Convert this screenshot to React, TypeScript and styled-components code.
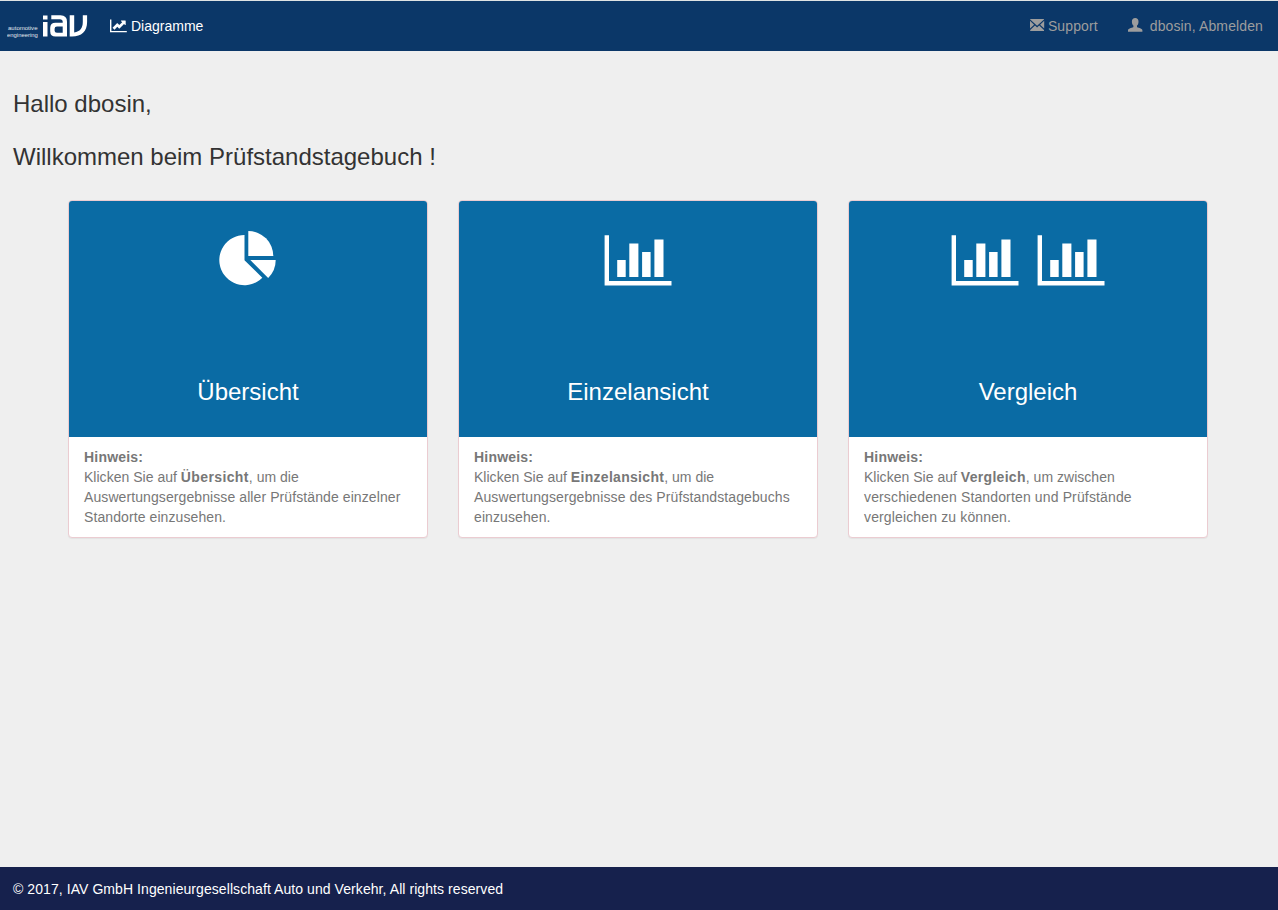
import React from "react";
import styled, { createGlobalStyle } from "styled-components";

const GlobalStyle = createGlobalStyle`
  *, *::before, *::after { box-sizing: border-box; }
  body {
    margin: 0;
    background: #efefef;
    color: #333;
    font-family: "Liberation Sans", Arial, Helvetica, sans-serif;
    font-size: 14px;
    line-height: 20px;
  }
`;

const Page = styled.div`
  display: flex;
  flex-direction: column;
  min-height: 100vh;
`;

const Navbar = styled.nav`
  display: flex;
  align-items: center;
  height: 51px;
  border-top: 1px solid #dfe3e3;
  background: #0b3768;
  padding: 0 15px 0 7px;
`;

const Brand = styled.a`
  display: block;
  width: 103px;
  height: 50px;
  svg { display: block; }
`;

const NavLink = styled.a<{ $active?: boolean; $gap: number }>`
  display: flex;
  align-items: center;
  gap: ${(p) => p.$gap}px;
  height: 50px;
  color: ${(p) => (p.$active ? "#fff" : "#9d9d9d")};
  letter-spacing: ${(p) => (p.$active ? "0" : "0.12px")};
  white-space: nowrap;
  svg { display: block; margin-bottom: ${(p) => (p.$active ? 0 : 2)}px; }
`;

const NavRight = styled.div`
  display: flex;
  gap: 30px;
  margin-left: auto;
`;

const Main = styled.main`
  flex: 1;
  padding: 40px 13px 0;
`;

const Heading = styled.h3`
  margin: 0 0 27px;
  font-size: 24px;
  font-weight: 500;
  line-height: 26px;
`;

const Cards = styled.div`
  display: grid;
  grid-template-columns: repeat(3, 360px);
  gap: 30px;
  width: 1140px;
  margin: 30px 0 0 55px;
`;

const Card = styled.section`
  border: 1px solid #ebccd1;
  border-radius: 4px;
  background: #fff;
  box-shadow: 0 1px 1px rgba(0, 0, 0, 0.05);
  overflow: hidden;
`;

const CardTop = styled.a`
  display: flex;
  flex-direction: column;
  align-items: center;
  justify-content: space-between;
  height: 236px;
  padding: 30px 0 32px;
  background: #0a6ba4;
  color: #fff;
`;

const Icons = styled.div<{ $shift?: number }>`
  display: flex;
  gap: 18.5px;
  height: 56px;
  margin-left: ${(p) => p.$shift ?? 0}px;
  svg { display: block; }
`;

const CardTitle = styled.div`
  font-size: 24px;
  line-height: 26px;
`;

const CardNote = styled.div<{ $tracking: number }>`
  padding: 10px 15px;
  color: #777;
  letter-spacing: ${(p) => p.$tracking}px;
`;

const NoteLabel = styled.strong`
  display: block;
  letter-spacing: 0.2px;
`;

const Lead = styled.span`
  letter-spacing: 0.02px;
`;

const Term = styled.strong<{ $tracking?: number }>`
  letter-spacing: ${(p) => p.$tracking ?? 0.38}px;
`;

const Footer = styled.footer`
  height: 43px;
  padding: 12px 13px;
  background: #16214d;
  color: #fff;
  letter-spacing: 0.07px;
`;

const LogoText = styled.text`
  font-family: "Liberation Sans", Arial, sans-serif;
  font-size: 6px;
  fill: #e2e8ee;
`;

const Logo = () => (
  <svg width="82" height="50" viewBox="7 1 82 50">
    <LogoText x="8" y="30.2" textLength="29.5" lengthAdjust="spacingAndGlyphs">automotive</LogoText>
    <LogoText x="7" y="36.7" textLength="30.8" lengthAdjust="spacingAndGlyphs">engineering</LogoText>
    <path fill="#fff" d="M43 15.4h4.5v4H43zM43 22h4.5v14.5H43z" />
    <path
      fill="#fff"
      fillRule="evenodd"
      d="M51.3 15.3H60.5Q67 15.3 67 21.8V36.5H55.5Q50.2 36.5 50.2 31.2V28Q50.2 22.8 55.5 22.8H62.7V21.8Q62.7 19.2 59.8 19.2H51.3ZM62.7 26.5H57Q54.6 26.5 54.6 28.7V30.7Q54.6 32.8 57 32.8H62.7Z"
    />
    <path fill="#fff" d="M69.7 15.3H74.2V32.4C80 31.7 82.8 28 82.8 22V15.3H87.1V22C87.1 31.5 81.5 36.5 72 36.5H69.7Z" />
  </svg>
);

const LineChartIcon = () => (
  <svg width="17" height="14" viewBox="0 0 17 14" fill="#fff">
    <path d="M0 0.6H1.4V12H16.8V13.3H0Z" />
    <path d="M15.7 2V5.8Q15.6 6.3 15.1 5.9L14 4.9L9.6 9.4Q9.3 9.7 9 9.4L7.3 7.7L4.5 10.7L2.5 8.8L7 4.3Q7.3 4 7.6 4.3L9.3 6L12.2 3.2L11.1 2.2Q10.8 1.8 11.2 1.5H15.3Q15.7 1.5 15.7 2Z" />
  </svg>
);

const EnvelopeIcon = () => (
  <svg width="15" height="14" viewBox="0 0 15 14" fill="#9d9d9d">
    <path d="M0.2 1H14V1.6L7.1 7.8L0.2 1.6ZM0 2.8L4.1 6.7L0 10.6ZM14.2 2.8V10.6L10.1 6.7ZM5 7.5L7.1 9.4L9.2 7.5L14 12V13H0.2V12Z" />
  </svg>
);

const UserIcon = () => (
  <svg width="15" height="14" viewBox="0 0 15 14" fill="#9d9d9d">
    <path d="M7.2 0C9.3 0 10.5 1.4 10.5 3.4C10.5 5.6 9.9 6.6 9 7.6V9.1C9 9.8 14.4 10.3 14.4 12.3V13.8H0V12.3C0 10.3 5.4 9.8 5.4 9.1V7.6C4.5 6.6 3.9 5.6 3.9 3.4C3.9 1.4 5.1 0 7.2 0Z" />
  </svg>
);

const PieIcon = () => (
  <svg width="58" height="56" viewBox="218.5 231 58 56" fill="#fff">
    <path d="M244 235V260.2L261.8 277.7A25.1 25.1 0 1 1 244 235Z" />
    <path d="M247.8 231A25 25 0 0 1 272.8 256H247.8Z" />
    <path d="M249.8 260H275.2A25.3 25.3 0 0 1 267.7 278Z" />
  </svg>
);

const BarsIcon = () => (
  <svg width="68" height="56" viewBox="0 0 68 56" fill="#fff">
    <path d="M0.6 4.3H5V50H67.5V54.5H0.6ZM13.2 29H21.7V46H13.2ZM25.3 12.5H34.4V46H25.3ZM38.1 21H46.6V46H38.1ZM50.4 8.5H59.5V46H50.4Z" />
  </svg>
);

export default function App() {
  return (
    <>
      <GlobalStyle />
      <Page>
        <Navbar>
          <Brand><Logo /></Brand>
          <NavLink $active $gap={4}><LineChartIcon />Diagramme</NavLink>
          <NavRight>
            <NavLink $gap={3}><EnvelopeIcon />Support</NavLink>
            <NavLink $gap={7}><UserIcon />dbosin, Abmelden</NavLink>
          </NavRight>
        </Navbar>
        <Main>
          <Heading>Hallo dbosin,</Heading>
          <Heading>Willkommen beim Prüfstandstagebuch !</Heading>
          <Cards>
            <Card>
              <CardTop><Icons $shift={-1}><PieIcon /></Icons><CardTitle>Übersicht</CardTitle></CardTop>
              <CardNote $tracking={0.09}>
                <NoteLabel>Hinweis:</NoteLabel>
                <Lead>Klicken Sie auf <Term>Übersicht</Term>, um die </Lead>
                Auswertungsergebnisse aller Prüfstände einzelner Standorte einzusehen.
              </CardNote>
            </Card>
            <Card>
              <CardTop><Icons><BarsIcon /></Icons><CardTitle>Einzelansicht</CardTitle></CardTop>
              <CardNote $tracking={0.1}>
                <NoteLabel>Hinweis:</NoteLabel>
                <Lead>Klicken Sie auf <Term $tracking={0.3}>Einzelansicht</Term>, um die </Lead>
                Auswertungsergebnisse des Prüfstandstagebuchs einzusehen.
              </CardNote>
            </Card>
            <Card>
              <CardTop><Icons><BarsIcon /><BarsIcon /></Icons><CardTitle>Vergleich</CardTitle></CardTop>
              <CardNote $tracking={0.14}>
                <NoteLabel>Hinweis:</NoteLabel>
                <Lead>Klicken Sie auf <Term $tracking={0.3}>Vergleich</Term>, um zwischen </Lead>
                verschiedenen Standorten und Prüfstände vergleichen zu können.
              </CardNote>
            </Card>
          </Cards>
        </Main>
        <Footer>© 2017, IAV GmbH Ingenieurgesellschaft Auto und Verkehr, All rights reserved</Footer>
      </Page>
    </>
  );
}
